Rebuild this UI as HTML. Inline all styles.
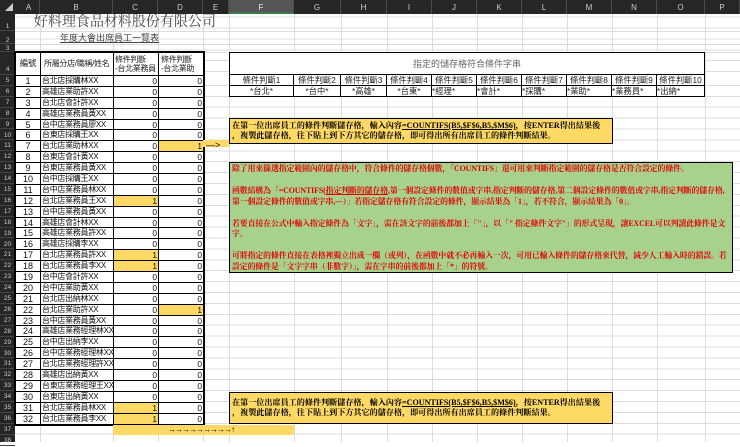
<!DOCTYPE html>
<html><head><meta charset="utf-8">
<style>
*{margin:0;padding:0;box-sizing:border-box}
body{width:740px;height:442px;overflow:hidden;background:#fff;position:relative;font-family:"Liberation Sans","Noto Sans CJK TC",sans-serif;color:#000}
.abs{position:absolute}
#grid{position:absolute;left:15px;top:14px;width:725px;height:428px;
background-image:repeating-linear-gradient(to bottom,transparent 0,transparent 9.9px,#dcdcdc 9.9px,#dcdcdc 10.9px);
background-position:0 61px;}
.vl{position:absolute;top:14px;height:428px;width:1px;background:#dcdcdc}
.hl{position:absolute;left:15px;width:725px;height:1px;background:#dcdcdc}
#colh{left:0;top:0;width:740px;height:14px;background:#262626;color:#ccc;font-size:8px}
#colh div{position:absolute;top:0;height:14px;line-height:15px;text-align:center;border-right:1px solid #4a4a4a}
#rowh{left:0;top:14px;width:15px;height:428px;background:#262626}
#rowh div{position:absolute;left:0;width:15px;color:#ccc;font-size:6.5px;text-align:center;border-bottom:1px solid #444}
table{border-collapse:collapse;position:absolute;left:15px;top:52px;width:188px;table-layout:fixed;background:#fff}
td{border:1px solid #000;height:10.9px;font-size:8.4px;line-height:8px;padding:0 1px;white-space:nowrap;overflow:hidden;color:#111}
td+td{font-size:8px;letter-spacing:-0.3px}
td.n{text-align:center;font-size:9px}
td.v{text-align:right;font-size:8.4px;letter-spacing:0}
td.y{background:#ffd966}
tr.h td{height:23px;font-size:8px;line-height:9.5px;color:#222;letter-spacing:-0.3px}
table{outline:1.5px solid #000}
.box{position:absolute;border:1.5px solid #000;font-weight:bold;font-size:8.1px;line-height:10px;white-space:nowrap;font-family:"Liberation Serif","Noto Serif CJK SC",serif;overflow:hidden}
</style></head><body>
<div id="grid"></div>
<div class="vl" style="left:40px"></div><div class="vl" style="left:113px"></div><div class="vl" style="left:158px"></div><div class="vl" style="left:203px"></div><div class="vl" style="left:229px"></div><div class="vl" style="left:294px"></div><div class="vl" style="left:341px"></div><div class="vl" style="left:387px"></div><div class="vl" style="left:432px"></div><div class="vl" style="left:477px"></div><div class="vl" style="left:522px"></div><div class="vl" style="left:567px"></div><div class="vl" style="left:612px"></div><div class="vl" style="left:657px"></div><div class="vl" style="left:705px"></div>
<div class="hl" style="top:31px"></div><div class="hl" style="top:44px"></div><div class="hl" style="top:52px"></div>

<div id="colh" class="abs">
<div style="left:0;width:18px;border-right:none">◢</div>
<div style="left:18px;width:22px">A</div><div style="left:40px;width:73px">B</div><div style="left:113px;width:45px">C</div><div style="left:158px;width:45px">D</div><div style="left:203px;width:26px">E</div><div style="left:229px;width:65px;background:#555;border-bottom:2px solid #3a7a4a;color:#eee">F</div><div style="left:294px;width:47px">G</div><div style="left:341px;width:46px">H</div><div style="left:387px;width:45px">I</div><div style="left:432px;width:45px">J</div><div style="left:477px;width:45px">K</div><div style="left:522px;width:45px">L</div><div style="left:567px;width:45px">M</div><div style="left:612px;width:45px">N</div><div style="left:657px;width:48px">O</div><div style="left:705px;width:35px">P</div>
</div>
<div id="rowh" class="abs">
<div style="top:0;height:17px;line-height:26px">1</div>
<div style="top:17px;height:13px;line-height:20px">2</div>
<div style="top:30px;height:8px;line-height:9px">3</div>
<div style="top:38px;height:23px;line-height:36px">4</div>
<div style="top:61px;height:10.9px;line-height:12px">5</div><div style="top:71.9px;height:10.9px;line-height:12px">6</div><div style="top:82.8px;height:10.9px;line-height:12px">7</div><div style="top:93.7px;height:10.9px;line-height:12px">8</div><div style="top:104.6px;height:10.9px;line-height:12px">9</div><div style="top:115.5px;height:10.9px;line-height:12px">10</div><div style="top:126.4px;height:10.9px;line-height:12px">11</div><div style="top:137.3px;height:10.9px;line-height:12px">12</div><div style="top:148.2px;height:10.9px;line-height:12px">13</div><div style="top:159.1px;height:10.9px;line-height:12px">14</div><div style="top:170px;height:10.9px;line-height:12px">15</div><div style="top:180.9px;height:10.9px;line-height:12px">16</div><div style="top:191.8px;height:10.9px;line-height:12px">17</div><div style="top:202.7px;height:10.9px;line-height:12px">18</div><div style="top:213.6px;height:10.9px;line-height:12px">19</div><div style="top:224.5px;height:10.9px;line-height:12px">20</div><div style="top:235.4px;height:10.9px;line-height:12px">21</div><div style="top:246.3px;height:10.9px;line-height:12px">22</div><div style="top:257.2px;height:10.9px;line-height:12px">23</div><div style="top:268.1px;height:10.9px;line-height:12px">24</div><div style="top:279px;height:10.9px;line-height:12px">25</div><div style="top:289.9px;height:10.9px;line-height:12px">26</div><div style="top:300.8px;height:10.9px;line-height:12px">27</div><div style="top:311.7px;height:10.9px;line-height:12px">28</div><div style="top:322.6px;height:10.9px;line-height:12px">29</div><div style="top:333.5px;height:10.9px;line-height:12px">30</div><div style="top:344.4px;height:10.9px;line-height:12px">31</div><div style="top:355.3px;height:10.9px;line-height:12px">32</div><div style="top:366.2px;height:10.9px;line-height:12px">33</div><div style="top:377.1px;height:10.9px;line-height:12px">34</div><div style="top:388px;height:10.9px;line-height:12px">35</div><div style="top:398.9px;height:10.9px;line-height:12px">36</div><div style="top:409.8px;height:10.9px;line-height:12px">37</div><div style="top:420.7px;height:10.9px;line-height:12px">38</div>
</div>

<div class="abs" style="left:34px;top:14px;font-size:14px;color:#444;font-family:'Liberation Serif','Noto Serif CJK TC',serif;line-height:17px">好料理食品材料股份有限公司</div>
<div class="abs" style="left:60px;top:32px;font-size:9px;color:#444;text-decoration:underline;line-height:12px">年度大會出席員工一覽表</div>

<table>
<colgroup><col style="width:25px"><col style="width:73px"><col style="width:45px"><col style="width:45px"></colgroup>
<tr class="h"><td class="n" style="vertical-align:middle;font-size:8.5px">編號</td><td style="padding-left:3px">所屬分店/職稱/姓名</td><td style="padding-left:1px">條件判斷<br>-台北業務員</td><td style="padding-left:2px">條件判斷<br>-台北業助</td></tr>
<tr><td class="n">1</td><td>台北店採購林XX</td><td class="v">0</td><td class="v">0</td></tr>
<tr><td class="n">2</td><td>高雄店業助許XX</td><td class="v">0</td><td class="v">0</td></tr>
<tr><td class="n">3</td><td>台北店會計許XX</td><td class="v">0</td><td class="v">0</td></tr>
<tr><td class="n">4</td><td>高雄店業務員黃XX</td><td class="v">0</td><td class="v">0</td></tr>
<tr><td class="n">5</td><td>台中店業務員廖XX</td><td class="v">0</td><td class="v">0</td></tr>
<tr><td class="n">6</td><td>台東店採購王XX</td><td class="v">0</td><td class="v">0</td></tr>
<tr><td class="n">7</td><td>台北店業助林XX</td><td class="v">0</td><td class="v y">1</td></tr>
<tr><td class="n">8</td><td>台東店會計黃XX</td><td class="v">0</td><td class="v">0</td></tr>
<tr><td class="n">9</td><td>台東店業務員黃XX</td><td class="v">0</td><td class="v">0</td></tr>
<tr><td class="n">10</td><td>台中店採購王XX</td><td class="v">0</td><td class="v">0</td></tr>
<tr><td class="n">11</td><td>台中店業務員林XX</td><td class="v">0</td><td class="v">0</td></tr>
<tr><td class="n">12</td><td>台北店業務員王XX</td><td class="v y">1</td><td class="v">0</td></tr>
<tr><td class="n">13</td><td>台中店業務員黃XX</td><td class="v">0</td><td class="v">0</td></tr>
<tr><td class="n">14</td><td>高雄店會計林XX</td><td class="v">0</td><td class="v">0</td></tr>
<tr><td class="n">15</td><td>高雄店業務員許XX</td><td class="v">0</td><td class="v">0</td></tr>
<tr><td class="n">16</td><td>高雄店採購李XX</td><td class="v">0</td><td class="v">0</td></tr>
<tr><td class="n">17</td><td>台北店業務員許XX</td><td class="v y">1</td><td class="v">0</td></tr>
<tr><td class="n">18</td><td>台北店業務員李XX</td><td class="v y">1</td><td class="v">0</td></tr>
<tr><td class="n">19</td><td>台中店會計許XX</td><td class="v">0</td><td class="v">0</td></tr>
<tr><td class="n">20</td><td>台中店業助黃XX</td><td class="v">0</td><td class="v">0</td></tr>
<tr><td class="n">21</td><td>台北店出納林XX</td><td class="v">0</td><td class="v">0</td></tr>
<tr><td class="n">22</td><td>台北店業助許XX</td><td class="v">0</td><td class="v y">1</td></tr>
<tr><td class="n">23</td><td>台中店業務員黃XX</td><td class="v">0</td><td class="v">0</td></tr>
<tr><td class="n">24</td><td>高雄店業務經理林XX</td><td class="v">0</td><td class="v">0</td></tr>
<tr><td class="n">25</td><td>台中店出納李XX</td><td class="v">0</td><td class="v">0</td></tr>
<tr><td class="n">26</td><td>台中店業務經理林XX</td><td class="v">0</td><td class="v">0</td></tr>
<tr><td class="n">27</td><td>台北店業務經理許XX</td><td class="v">0</td><td class="v">0</td></tr>
<tr><td class="n">28</td><td>高雄店出納黃XX</td><td class="v">0</td><td class="v">0</td></tr>
<tr><td class="n">29</td><td>台東店業務經理王XX</td><td class="v">0</td><td class="v">0</td></tr>
<tr><td class="n">30</td><td>台東店出納黃XX</td><td class="v">0</td><td class="v">0</td></tr>
<tr><td class="n">31</td><td>台北店業務員林XX</td><td class="v y">1</td><td class="v">0</td></tr>
<tr><td class="n">32</td><td>台北店業務員李XX</td><td class="v y">1</td><td class="v">0</td></tr>
</table>

<div class="abs" style="left:229px;top:52px;width:476px;height:45px;border:1.5px solid #000;background:#fff;font-size:8.3px;color:#222;white-space:nowrap">
<div style="height:21.5px;border-bottom:1px solid #000;text-align:center;line-height:22px;color:#666;font-size:9px">指定的儲存格符合條件字串</div>
<div style="display:flex;height:11px;border-bottom:1px solid #000;line-height:11px;text-align:center">
<div style="width:64px;border-right:1px solid #000">條件判斷1</div><div style="width:47px;border-right:1px solid #000">條件判斷2</div><div style="width:46px;border-right:1px solid #000">條件判斷3</div><div style="width:45px;border-right:1px solid #000">條件判斷4</div><div style="width:45px;border-right:1px solid #000">條件判斷5</div><div style="width:45px;border-right:1px solid #000">條件判斷6</div><div style="width:45px;border-right:1px solid #000">條件判斷7</div><div style="width:45px;border-right:1px solid #000">條件判斷8</div><div style="width:45px;border-right:1px solid #000">條件判斷9</div><div style="flex:1">條件判斷10</div></div>
<div style="display:flex;height:10px;line-height:10px">
<div style="width:64px;border-right:1px solid #000;text-align:center">*台北*</div><div style="width:47px;border-right:1px solid #000;text-align:center">*台中*</div><div style="width:46px;border-right:1px solid #000;text-align:center">*高雄*</div><div style="width:45px;border-right:1px solid #000;text-align:center">*台東*</div><div style="width:45px;border-right:1px solid #000">*經理*</div><div style="width:45px;border-right:1px solid #000">*會計*</div><div style="width:45px;border-right:1px solid #000">*採購*</div><div style="width:45px;border-right:1px solid #000">*業助*</div><div style="width:45px;border-right:1px solid #000">*業務員*</div><div style="flex:1">*出納*</div></div>
</div>

<div class="abs" style="left:203px;top:140px;width:26px;height:7px;background:#ffd966"></div>
<div class="abs" style="left:206px;top:140px;font-size:9px;line-height:10px">—&gt;</div>

<div class="box" style="left:229px;top:118px;width:384px;height:26px;background:#ffd966;padding:2px 0 0 2px">在第一位出席員工的條件判斷儲存格，輸入內容<u>=COUNTIFS(B5,$F$6,B5,$M$6)</u>，按ENTER得出結果後<br>，複製此儲存格，往下貼上到下方其它的儲存格，即可得出所有出席員工的條件判斷結果。</div>

<div class="box" style="left:229px;top:162px;width:504px;height:111px;background:#a9d18e;color:#e00000;padding:1px 0 0 2px;line-height:10.9px;white-space:normal;font-size:7.9px;letter-spacing:-0.1px">除了用來篩選指定範圍內的儲存格中，符合條件的儲存格個數，「COUNTIFS」還可用來判斷指定範圍的儲存格是否符合設定的條件。<br><br>函數結構為「=COUNTIFS(<u>指定判斷的儲存格</u>,第一個設定條件的數值或字串,指定判斷的儲存格,第二個設定條件的數值或字串,指定判斷的儲存格,第一個設定條件的數值或字串,---）」若指定儲存格有符合設定的條件，顯示結果為「1」，若不符合，顯示結果為「0」。<br><br>若要直接在公式中輸入指定條件為「文字」，需在該文字的前後都加上「"」，以「" 指定條件文字"」的形式呈現，讓EXCEL可以判讀此條件是文字。<br><br>可將指定的條件直接在表格裡獨立出成一欄（或列），在函數中就不必再輸入一次，可用已輸入條件的儲存格來代替，減少人工輸入時的錯誤。若設定的條件是「文字字串（非數字）」，需在字串的前後都加上「*」的符號。</div>

<div class="box" style="left:229px;top:392px;width:384px;height:32px;background:#ffd966;padding:5px 0 0 2px">在第一位出席員工的條件判斷儲存格，輸入內容<u>=COUNTIFS(B5,$F$6,B5,$M$6)</u>，按ENTER得出結果後<br>，複製此儲存格，往下貼上到下方其它的儲存格，即可得出所有出席員工的條件判斷結果。</div>

<div class="abs" style="left:113px;top:425px;width:181px;height:10px;background:#ffd966"></div>
<div class="abs" style="left:168px;top:424px;font-size:8px;line-height:11px;font-weight:bold;letter-spacing:-1px">→→→→→→→→→↑</div>
</body></html>
